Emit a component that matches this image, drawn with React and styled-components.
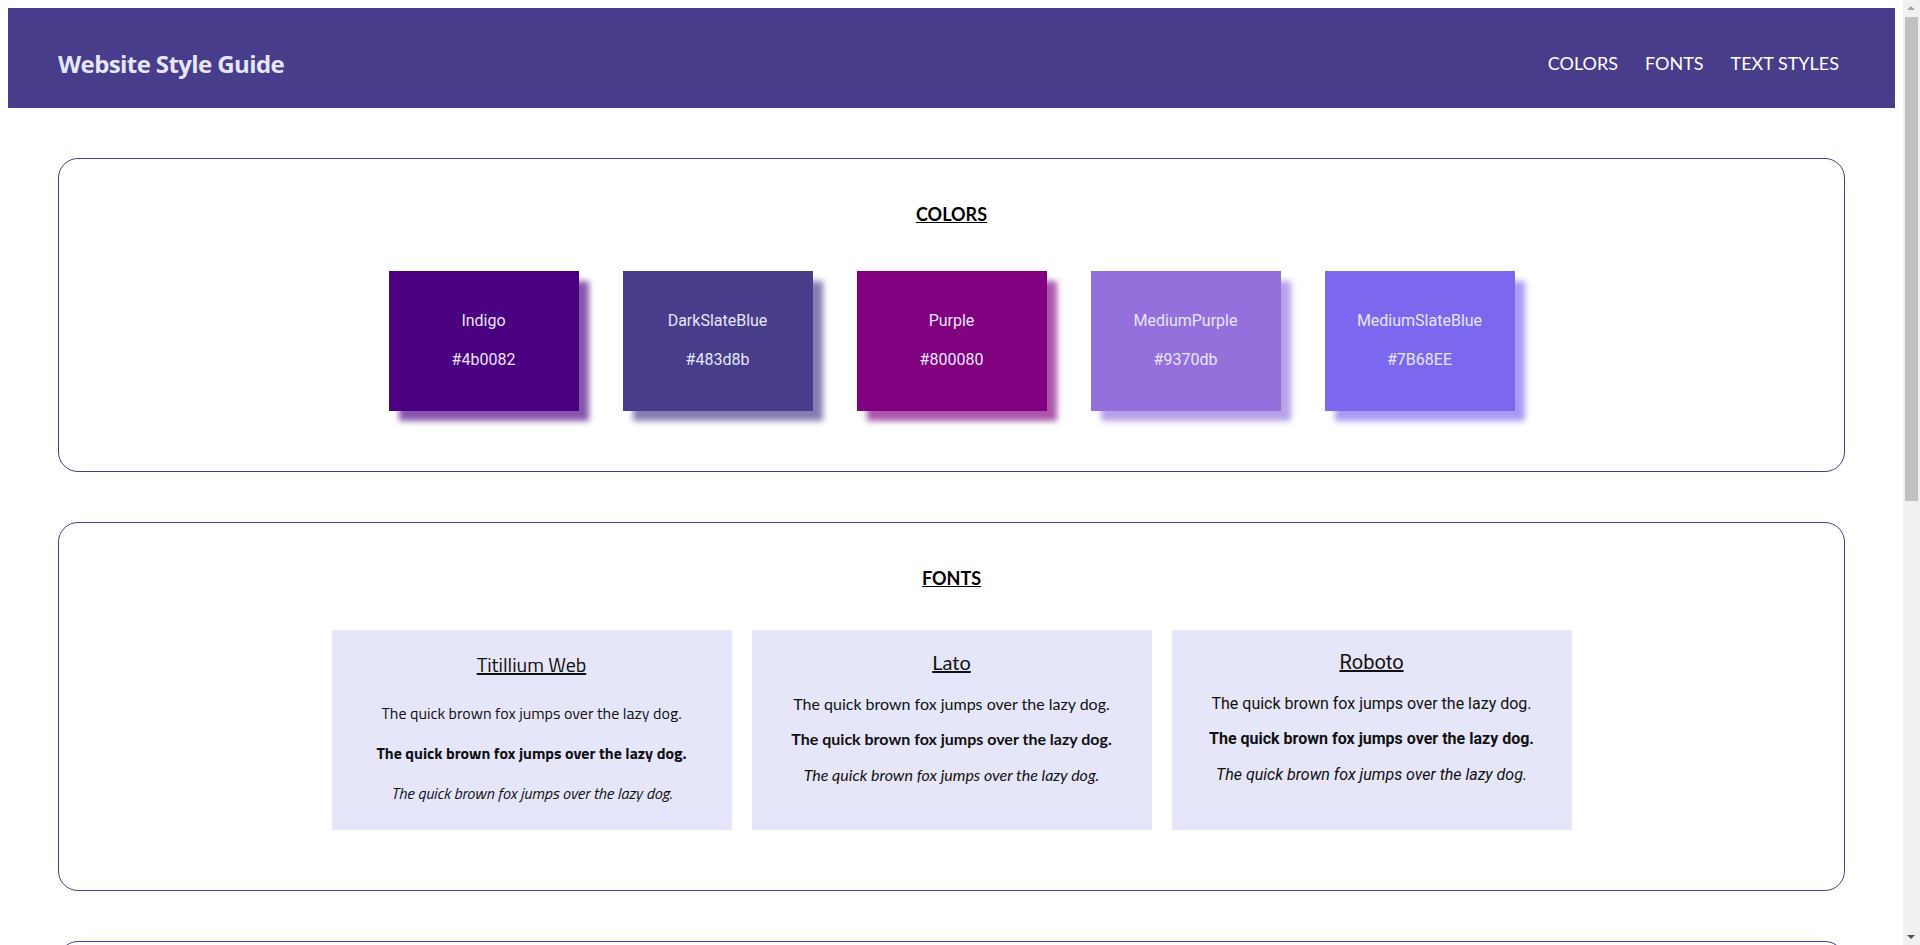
import styled, { createGlobalStyle } from "styled-components";

const GlobalStyle = createGlobalStyle`
  body {
    margin: 8px 25px 8px 8px;
    background: #fff;
    font-family: "Lato", "Liberation Sans", sans-serif;
    color: #000;
  }
`;

const Header = styled.header`
  height: 100px;
  box-sizing: border-box;
  padding: 10px 56px 0 50px;
  background: #483d8b;
  display: flex;
  align-items: center;
  justify-content: space-between;
`;

const Logo = styled.h1`
  margin: 0;
  font-family: "Open Sans", "Liberation Sans", sans-serif;
  font-size: 24px;
  font-weight: 700;
  letter-spacing: -0.6px;
  color: #e6e6fa;
`;

const Nav = styled.nav`
  display: flex;
  gap: 27px;
`;

const NavLink = styled.a`
  font-family: "Lato", sans-serif;
  font-size: 18px;
  color: #fff;
  text-decoration: none;
`;

const Main = styled.main`
  padding: 50px;
  display: flex;
  flex-direction: column;
  gap: 50px;
`;

const Section = styled.section`
  border: 1px solid #483d8b;
  border-radius: 20px;
  padding: 45px 20px 60px;
  display: flex;
  flex-direction: column;
  align-items: center;
`;

const SectionTitle = styled.h2`
  margin: 0 0 40px;
  font-family: "Lato", sans-serif;
  font-size: 18px;
  font-weight: 700;
  line-height: 1.2;
  text-decoration: underline;
`;

const SwatchRow = styled.div`
  display: flex;
  justify-content: center;
  gap: 44px;
  padding-top: 5px;
`;

const Swatch = styled.div`
  width: 190px;
  height: 140px;
  background: ${(p) => p.$color};
  box-shadow: 10px 10px 6px ${(p) => p.$color}aa;
  display: flex;
  flex-direction: column;
  align-items: center;
  justify-content: center;
  gap: 20px;
  padding-bottom: 2px;
  box-sizing: border-box;
  font-family: "Roboto", sans-serif;
  font-size: 16px;
  line-height: 19px;
  color: #e6e6fa;
`;

const FontRow = styled.div`
  display: flex;
  justify-content: center;
  gap: 20px;
  padding-top: 1px;
`;

const FontCard = styled.div`
  width: 400px;
  height: 200px;
  background: #e6e6fa;
  display: flex;
  flex-direction: column;
  align-items: center;
  font-family: ${(p) => p.$family};
  line-height: ${(p) => p.$lh};
  color: #111;

  h3 {
    margin: 20px 0;
    font-size: 20px;
    font-weight: 400;
    text-decoration: underline;
  }

  p {
    margin: 0 0 16px;
    font-size: 16px;
  }

  .bold {
    font-weight: 700;
  }

  .italic {
    font-style: italic;
  }
`;

const StyleList = styled.div`
  width: 1240px;
  display: flex;
  flex-direction: column;
  gap: 18px;
  font-family: "Lato", sans-serif;

  h1, h2, h3, h4, h5, h6, p {
    margin: 0;
  }

  h1 { font-size: 48px; }
  h2 { font-size: 40px; }
  h3 { font-size: 32px; }
  h4 { font-size: 26px; }
  h5 { font-size: 22px; }
  h6 { font-size: 18px; }
  p { font-size: 16px; line-height: 1.6; }
`;

/* stand-in for the browser's classic scrollbar seen in the screenshot */
const ScrollTrack = styled.div`
  position: fixed;
  top: 0;
  right: 0;
  width: 17px;
  height: 100vh;
  background: #f1f1f1;

  &::before,
  &::after {
    content: "";
    position: absolute;
    left: 4px;
    border-left: 4px solid transparent;
    border-right: 4px solid transparent;
  }

  &::before {
    top: 6px;
    border-bottom: 4px solid #a3a3a3;
  }

  &::after {
    bottom: 6px;
    border-top: 4px solid #505050;
  }
`;

const ScrollThumb = styled.div`
  position: absolute;
  top: 17px;
  left: 2px;
  width: 13px;
  height: 484px;
  background: #c1c1c1;
`;

const colors = [
  { name: "Indigo", hex: "#4b0082", value: "#4b0082" },
  { name: "DarkSlateBlue", hex: "#483d8b", value: "#483d8b" },
  { name: "Purple", hex: "#800080", value: "#800080" },
  { name: "MediumPurple", hex: "#9370db", value: "#9370db" },
  { name: "MediumSlateBlue", hex: "#7B68EE", value: "#7b68ee" },
];

const fonts = [
  { name: "Titillium Web", family: '"Titillium Web", "Open Sans", sans-serif', lh: 1.52 },
  { name: "Lato", family: '"Lato", sans-serif', lh: 1.2 },
  { name: "Roboto", family: '"Roboto", sans-serif', lh: 1.2 },
];

const sentence = "The quick brown fox jumps over the lazy dog.";

export default function App() {
  return (
    <>
      <GlobalStyle />
      <Header>
        <Logo>Website Style Guide</Logo>
        <Nav>
          <NavLink href="#colors">COLORS</NavLink>
          <NavLink href="#fonts">FONTS</NavLink>
          <NavLink href="#text">TEXT STYLES</NavLink>
        </Nav>
      </Header>
      <Main>
        <Section id="colors">
          <SectionTitle>COLORS</SectionTitle>
          <SwatchRow>
            {colors.map((c) => (
              <Swatch key={c.name} $color={c.value}>
                <span>{c.name}</span>
                <span>{c.hex}</span>
              </Swatch>
            ))}
          </SwatchRow>
        </Section>
        <Section id="fonts">
          <SectionTitle>FONTS</SectionTitle>
          <FontRow>
            {fonts.map((f) => (
              <FontCard key={f.name} $family={f.family} $lh={f.lh}>
                <h3>{f.name}</h3>
                <p>{sentence}</p>
                <p className="bold">{sentence}</p>
                <p className="italic">{sentence}</p>
              </FontCard>
            ))}
          </FontRow>
        </Section>
        <Section id="text">
          <SectionTitle>TEXT STYLES</SectionTitle>
          <StyleList>
            <h1>Heading One</h1>
            <h2>Heading Two</h2>
            <h3>Heading Three</h3>
            <h4>Heading Four</h4>
            <h5>Heading Five</h5>
            <h6>Heading Six</h6>
            <p>
              Paragraph text. Lorem ipsum dolor sit amet, consectetur adipiscing elit, sed do eiusmod
              tempor incididunt ut labore et dolore magna aliqua. Ut enim ad minim veniam, quis nostrud
              exercitation ullamco laboris nisi ut aliquip ex ea commodo consequat.
            </p>
            <p>
              Duis aute irure dolor in reprehenderit in voluptate velit esse cillum dolore eu fugiat nulla
              pariatur. Excepteur sint occaecat cupidatat non proident, sunt in culpa qui officia deserunt
              mollit anim id est laborum.
            </p>
          </StyleList>
        </Section>
      </Main>
      <ScrollTrack>
        <ScrollThumb />
      </ScrollTrack>
    </>
  );
}
